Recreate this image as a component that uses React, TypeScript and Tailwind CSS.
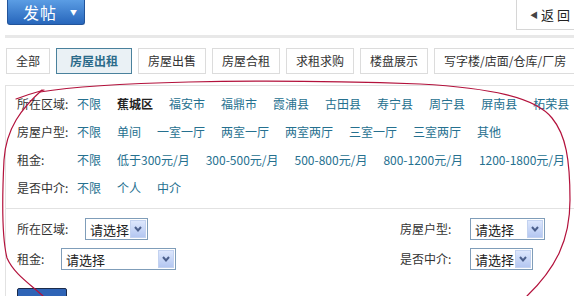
import React from "react";

const font = "font-['Noto_Sans_CJK_SC','Noto_Sans',sans-serif]";

const tabs = ["全部", "房屋出租", "房屋出售", "房屋合租", "求租求购", "楼盘展示", "写字楼/店面/仓库/厂房"];

const filters: { label: string; items: string[]; current?: string }[] = [
  { label: "所在区域:", items: ["不限", "蕉城区", "福安市", "福鼎市", "霞浦县", "古田县", "寿宁县", "周宁县", "屏南县", "柘荣县"], current: "蕉城区" },
  { label: "房屋户型:", items: ["不限", "单间", "一室一厅", "两室一厅", "两室两厅", "三室一厅", "三室两厅", "其他"] },
  { label: "租金:", items: ["不限", "低于300元/月", "300-500元/月", "500-800元/月", "800-1200元/月", "1200-1800元/月"] },
  { label: "是否中介:", items: ["不限", "个人", "中介"] },
];

function Select({ width }: { width: string }) {
  return (
    <div className={`flex h-[22px] shrink-0 items-center justify-between border border-[#7f9db9] bg-white ${width}`}>
      <span className="whitespace-nowrap pl-[4px] text-[13px] leading-none text-[#222]">请选择</span>
      <span className="m-[1px] flex h-[18px] w-[16px] items-center justify-center border border-[#c3d2f0] bg-linear-to-b from-[#dde7fd] to-[#b4c7f1]">
        <svg width="10" height="8" viewBox="0 0 10 8">
          <path d="M2 2 L5 5.5 L8 2" fill="none" stroke="#4b5f8c" strokeWidth="2" />
        </svg>
      </span>
    </div>
  );
}

export default function App() {
  return (
    <div className={`relative h-[296px] w-[574px] overflow-hidden bg-white text-[12px] text-[#333] ${font}`}>
      {/* header */}
      <div className="flex h-[35px] items-start justify-between">
        <button className="ml-[7px] flex h-[25px] w-[78px] shrink-0 items-center gap-[13px] whitespace-nowrap rounded-b-[3px] border border-t-0 border-[#22549a] bg-linear-to-b from-[#5b9de4] to-[#2766bb] pl-[15px] text-[16px] leading-none text-white">
          <span className="tracking-[1px]">发帖</span>
          <span className="text-[7px]">▼</span>
        </button>
        <div className="flex h-[30px] w-[58px] shrink-0 items-center whitespace-nowrap border-b border-l border-[#d6d6d6] pl-[13px] text-[13px] text-[#222]">
          <span className="mr-[3px] text-[8px] text-[#444]">◀</span>
          <span className="tracking-[3px]">返回</span>
        </div>
      </div>
      <div className="ml-[5px] h-[3px] bg-[#e8e8e8]" />

      {/* tabs */}
      <div className="ml-[6px] mt-[10px] flex gap-[6px] whitespace-nowrap">
        {tabs.map((t, i) =>
          i === 1 ? (
            <div key={t} className="h-[26px] shrink-0 border border-[#4a819c] bg-[#eaf1f5] px-[13px] font-bold leading-[24px] text-[#2b6b8a]">
              {t}
            </div>
          ) : (
            <div key={t} className="h-[26px] shrink-0 border border-[#dcdcdc] px-[9px] leading-[24px] text-[#333]">
              {t}
            </div>
          )
        )}
      </div>

      {/* filter box */}
      <div className="ml-[5px] mt-[11px] border-l border-t border-[#e2e2e2]">
        <div className="pb-[6px] pl-[11px] pt-[4px]">
          {filters.map((f) => (
            <div key={f.label} className="flex h-[28px] items-center whitespace-nowrap">
              <span className="w-[60px] shrink-0">{f.label}</span>
              {f.items.map((it) => (
                <span
                  key={it}
                  className={`mr-[16px] shrink-0 ${it === f.current ? "font-bold text-[#222]" : "text-[#25708f]"}`}
                >
                  {it}
                </span>
              ))}
            </div>
          ))}
        </div>

        <div className="border-t border-[#e2e2e2] pl-[11px] pt-[9px]">
          <div className="flex flex-col gap-[8px] whitespace-nowrap">
            <div className="flex items-center">
              <div className="flex w-[383px] shrink-0 items-center">
                <span className="w-[68px] shrink-0">所在区域:</span>
                <Select width="w-[63px]" />
              </div>
              <span className="w-[70px] shrink-0">房屋户型:</span>
              <Select width="w-[75px]" />
            </div>
            <div className="flex items-center">
              <div className="flex w-[383px] shrink-0 items-center">
                <span className="w-[44px] shrink-0">租金:</span>
                <Select width="w-[115px]" />
              </div>
              <span className="w-[70px] shrink-0">是否中介:</span>
              <Select width="w-[63px]" />
            </div>
          </div>
          <div className="mt-[18px] h-[20px] w-[50px] rounded-t-[2px] border border-[#1b2b4b] bg-[#2f64b6]" />
        </div>
      </div>

      {/* hand-drawn red annotation */}
      <svg className="pointer-events-none absolute left-0 top-0" width="574" height="296" viewBox="0 0 574 296">
        <g fill="none" stroke="#b3123c" strokeWidth="1.2" strokeLinecap="round">
          <path d="M16 99 C 24 96, 33 93, 44 90" />
          <path d="M40 92 C 100 82, 250 78, 420 84 C 490 88, 535 97, 552 118 C 566 135, 570 160, 570 200 C 570 240, 556 268, 527 296" />
          <path d="M42 90 C 22 108, 6 128, 4 160 C 2 200, 2 238, 7 258 C 14 274, 30 284, 43 296" />
        </g>
      </svg>
    </div>
  );
}
